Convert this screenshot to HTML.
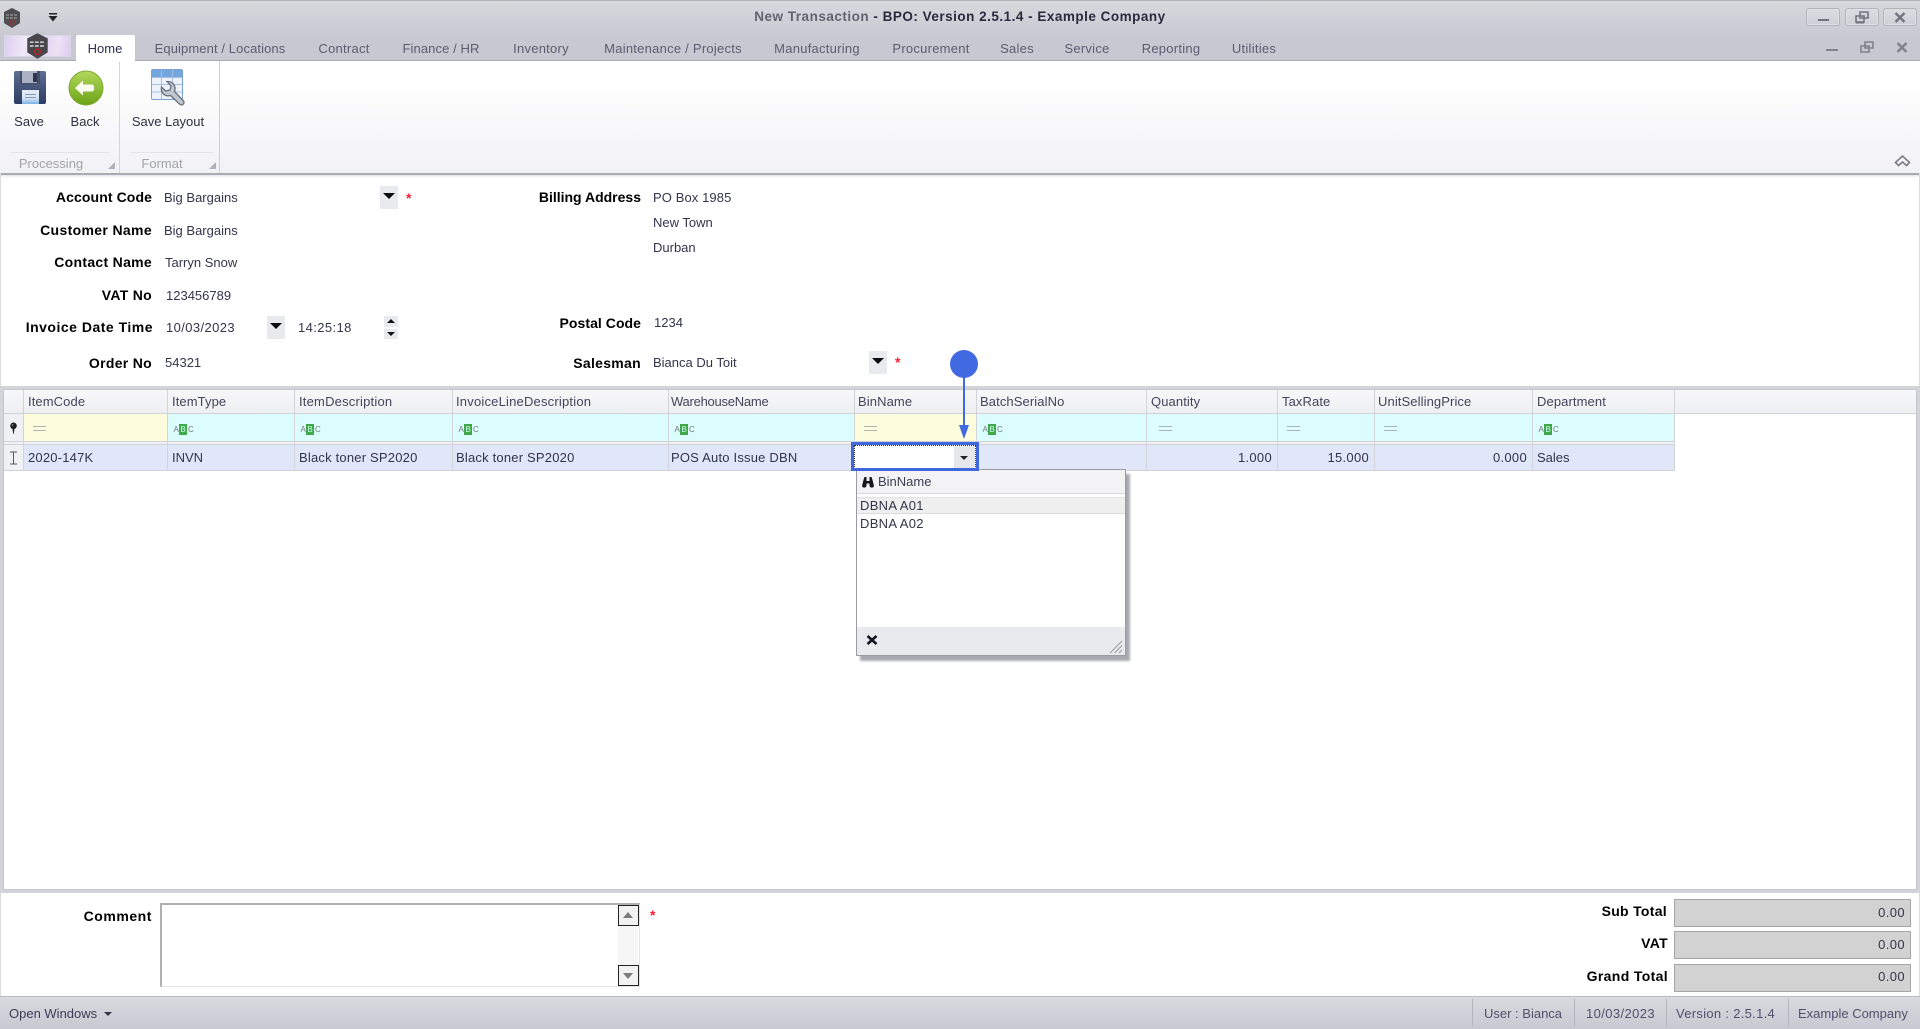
<!DOCTYPE html>
<html><head><meta charset="utf-8"><title>New Transaction</title>
<style>
html,body{margin:0;padding:0;background:#fff}
#a{position:relative;width:1920px;height:1029px;overflow:hidden;background:#fff;font:13px "Liberation Sans",sans-serif;color:#34344a;filter:blur(.3px)}
#a div,#a svg{position:absolute}
.t{position:absolute;white-space:nowrap;line-height:16px}
.r{text-align:right}
.c{transform:translateX(-50%)}
.b{font-weight:bold;font-size:14px;letter-spacing:.3px;color:#000}
.tab{color:#5c5d70;top:41px;letter-spacing:.25px}
.h{top:394px;color:#44455a;letter-spacing:.1px}
.d{top:450px;color:#33344a}
.star{color:#f5203a;font-weight:bold;font-size:14px}
.dd{background:#e9eaee;width:18px;height:23px}
.tri{width:0;height:0;border-left:6px solid transparent;border-right:6px solid transparent;border-top:6px solid #0c0c0c}
.ln{background:#d3d4da;width:1px}
.eq{width:13px;height:3px;border-top:1.500px solid #b0b1b8;border-bottom:1.500px solid #b0b1b8;top:425.500px}
.abc{top:424px;width:20px;height:11px;font-size:8px;line-height:11px;color:#777}
.abc i{font-style:normal;position:absolute;top:0}
.abc b{position:absolute;left:6px;top:0;width:8px;height:11px;background:#3fa84a;color:#cfe;font-weight:normal;text-align:center}
.box{background:#d2d2d2;border:1px solid #a6a6a6;left:1674px;width:235px;height:26px;box-sizing:content-box}
.sep{background:#b4b5bc;width:1px;top:999px;height:27px}
.win{border:1px solid #b2b3bb;border-radius:3px;background:linear-gradient(#dcdde1,#cfd0d7);box-sizing:border-box;height:18px;top:8px;box-shadow:inset 0 0 0 1px #dfe0e4}
</style></head><body><div id="a">

<!-- title + tabs -->
<div style="left:0;top:0;width:1920px;height:61px;background:linear-gradient(#d8d9dd,#c8c8d2 60%,#c8c8d2);border-top:1px solid #b2b3ba;box-sizing:border-box"></div>
<div style="left:0;top:60px;width:1920px;height:1px;background:#a8a9b1"></div>

<svg style="left:3px;top:8px" width="18" height="20" viewBox="0 0 18 20"><polygon points="9,0 17,4 17,15 9,20 1,15 1,4" fill="#4e4e52"/><path d="M3 7h12M3 10h12" stroke="#aaa" stroke-width="1" stroke-dasharray="3 1"/><circle cx="9" cy="14.500" r="2.200" fill="none" stroke="#a33" stroke-width="1"/></svg>
<svg style="left:47px;top:13px" width="12" height="9" viewBox="0 0 12 9"><path d="M2 0h8v1.500H2z" fill="#222"/><path d="M1.500 3h9L6 8.500z" fill="#222"/></svg>

<span class="t" style="left:0;width:1920px;text-align:center;top:9px;font-weight:bold;font-size:13.500px;letter-spacing:.5px;color:#2a2a3e"><span style="color:#62636f">New Transaction</span> - BPO: Version 2.5.1.4 - Example Company</span>

<div class="win" style="left:1806px;width:34px"></div>
<div style="left:1818px;top:19px;width:11px;height:2px;background:#73747f"></div>
<div class="win" style="left:1845px;width:34px"></div>
<svg style="left:1855px;top:11px" width="14" height="13" viewBox="0 0 14 13"><path d="M5 1h8v6H5zM1 5h8v6H1z" fill="#d3d4da" stroke="#73747f" stroke-width="1.600"/><path d="M1 12h8" stroke="#73747f"/></svg>
<div class="win" style="left:1883px;width:34px"></div>
<svg style="left:1894px;top:12px" width="12" height="11" viewBox="0 0 12 11"><path d="M1.500 1l9 9M10.500 1l-9 9" stroke="#73747f" stroke-width="2.400"/></svg>

<div style="left:1826px;top:49px;width:12px;height:2px;background:#80818c"></div>
<svg style="left:1860px;top:41px" width="14" height="13" viewBox="0 0 14 13"><path d="M5 1h8v6H5zM1 5h8v6H1z" fill="#c8c8d2" stroke="#80818c" stroke-width="1.600"/></svg>
<svg style="left:1896px;top:42px" width="12" height="11" viewBox="0 0 12 11"><path d="M1.500 1l9 9M10.500 1l-9 9" stroke="#80818c" stroke-width="2.400"/></svg>

<!-- app button -->
<div style="left:4px;top:35px;width:67px;height:22px;background:linear-gradient(100deg,#dccdf0,#f0e8f8 30%,#e2d2f2 55%,#ece2f6 80%,#dccbf0);border:1px solid #d8d8e0;box-sizing:border-box"></div>
<svg style="left:26px;top:33px" width="23" height="26" viewBox="0 0 18 20"><polygon points="9,0 17,4 17,15 9,20 1,15 1,4" fill="#47474b"/><path d="M3 7h12M3 10h12" stroke="#ddd" stroke-width="1.100" stroke-dasharray="3 1"/><circle cx="9" cy="14.500" r="2.200" fill="none" stroke="#b22" stroke-width="1"/></svg>
<div style="left:76px;top:35px;width:59px;height:27px;background:#fff;border-radius:2px 2px 0 0;z-index:2"></div>
<span class="t c" style="left:105px;top:41px;color:#2e3050;z-index:3">Home</span>
<span class="t c tab" style="left:220px;letter-spacing:.1px">Equipment / Locations</span>
<span class="t c tab" style="left:344px">Contract</span>
<span class="t c tab" style="left:441px;letter-spacing:.1px">Finance / HR</span>
<span class="t c tab" style="left:541px">Inventory</span>
<span class="t c tab" style="left:673px">Maintenance / Projects</span>
<span class="t c tab" style="left:817px">Manufacturing</span>
<span class="t c tab" style="left:931px">Procurement</span>
<span class="t c tab" style="left:1017px">Sales</span>
<span class="t c tab" style="left:1087px">Service</span>
<span class="t c tab" style="left:1171px">Reporting</span>
<span class="t c tab" style="left:1254px">Utilities</span>

<!-- ribbon -->
<div style="left:0;top:61px;width:1920px;height:112px;background:linear-gradient(#fff,#fff 14%,#f2f2f5 100%)"></div>
<div style="left:0;top:173px;width:1920px;height:2px;background:#a9aab2"></div>
<div style="left:0;top:175px;width:1920px;height:3px;background:linear-gradient(#e4e5ea,#fff)"></div>
<div style="left:119px;top:61px;width:1px;height:112px;background:#d4d5db"></div>
<div style="left:219px;top:61px;width:1px;height:112px;background:#cfd0d6"></div>
<div style="left:10px;top:152px;width:100px;height:1px;background:#e3e4e8"></div>
<div style="left:130px;top:152px;width:84px;height:1px;background:#e3e4e8"></div>
<span class="t c" style="left:51px;top:156px;color:#a2a3ab">Processing</span>
<span class="t c" style="left:162px;top:156px;color:#a2a3ab">Format</span>
<svg style="left:108px;top:162px" width="7" height="7"><path d="M7 0v7H0z" fill="#b0b1b8"/></svg>
<svg style="left:209px;top:162px" width="7" height="7"><path d="M7 0v7H0z" fill="#b0b1b8"/></svg>

<!-- save icon -->
<svg style="left:13px;top:70px" width="34" height="35" viewBox="0 0 34 35"><defs><linearGradient id="s" x1="0" y1="0" x2="0" y2="1"><stop offset="0" stop-color="#5f6f92"/><stop offset="1" stop-color="#2c3c62"/></linearGradient><linearGradient id="l" x1="0" y1="0" x2="0" y2="1"><stop offset="0" stop-color="#e6edf7"/><stop offset=".6" stop-color="#d5e3f4"/><stop offset="1" stop-color="#7db0e6"/></linearGradient></defs><rect x="1" y="1" width="32" height="33" rx="2" fill="url(#s)"/><rect x="7" y="1" width="20" height="13" fill="#454f6a"/><rect x="9" y="1" width="15" height="12" fill="#aab2c4"/><rect x="20" y="3" width="4" height="9" fill="#2c3450"/><rect x="9" y="20" width="17" height="14" fill="url(#l)"/><path d="M12 24.500h11M12 27.500h11" stroke="#8a99b2"/></svg>
<!-- back icon -->
<svg style="left:68px;top:70px" width="37" height="37" viewBox="0 0 37 37"><defs><linearGradient id="g" x1="0" y1="0" x2="0" y2="1"><stop offset="0" stop-color="#b2d85c"/><stop offset="1" stop-color="#6ca216"/></linearGradient></defs><circle cx="18" cy="18" r="17" fill="url(#g)" stroke="#80a830"/><path d="M7 18L15 10.500v4h9c3 0 3 7 0 7h-9v4z" fill="#fafdf0"/></svg>
<!-- layout icon -->
<svg style="left:150px;top:68px" width="38" height="38" viewBox="0 0 38 38"><rect x="1.500" y="1.500" width="31" height="30" rx="1.500" fill="#eef3fb" stroke="#7ba0d2"/><rect x="2" y="2" width="30" height="7.500" fill="#72a7de"/><path d="M11.500 2v29M22.500 2v29M2 9.500h30M2 16.500h30M2 24h30" stroke="#a4bfe3"/><path d="M33.500 33L24.500 23.500C26.500 18.500 23 13 17 13.500L21 18L20 22L15.500 23L11.500 19C10.500 25 15 29 20.500 27.500L30 36.500C32.500 38 35 35 33.500 33z" fill="#c2c6cf" stroke="#6a707c" stroke-width="1.300"/></svg>

<span class="t c" style="left:29px;top:114px;color:#2d2f44">Save</span>
<span class="t c" style="left:85px;top:114px;color:#2d2f44">Back</span>
<span class="t c" style="left:168px;top:114px;color:#2d2f44">Save Layout</span>
<svg style="left:1894px;top:154px" width="17" height="14" viewBox="0 0 17 14"><path d="M1.500 8.500L8.500 2l7 6.500-3 3-4-3.500-4 3.500z" fill="none" stroke="#7c7d88" stroke-width="1.600"/></svg>

<!-- form -->
<div style="left:0;top:173px;width:1px;height:823px;background:#dcdde1"></div>
<div style="left:1919px;top:173px;width:1px;height:823px;background:#dcdde1"></div>
<span class="t r b" style="right:1768px;top:189px;letter-spacing:.1px">Account Code</span>
<span class="t r b" style="right:1768px;top:222px;letter-spacing:.35px">Customer Name</span>
<span class="t r b" style="right:1768px;top:254px">Contact Name</span>
<span class="t r b" style="right:1768px;top:287px">VAT No</span>
<span class="t r b" style="right:1767px;top:319px;letter-spacing:.5px">Invoice Date Time</span>
<span class="t r b" style="right:1768px;top:355px">Order No</span>
<span class="t" style="left:164px;top:190px">Big Bargains</span>
<span class="t" style="left:164px;top:223px">Big Bargains</span>
<span class="t" style="left:165px;top:255px">Tarryn Snow</span>
<span class="t" style="left:166px;top:288px">123456789</span>
<span class="t" style="left:166px;top:320px;letter-spacing:.4px">10/03/2023</span>
<span class="t" style="left:298px;top:320px;letter-spacing:.4px">14:25:18</span>
<span class="t" style="left:165px;top:355px">54321</span>

<div class="dd" style="left:380px;top:186px"></div><div class="tri" style="left:383px;top:193px"></div>
<span class="t star" style="left:406px;top:190px">*</span>
<div class="dd" style="left:267px;top:316px"></div><div class="tri" style="left:270px;top:323px"></div>
<div class="dd" style="left:384px;top:316px;width:14px;height:11px"></div>
<div class="dd" style="left:384px;top:329px;width:14px;height:10px"></div>
<div style="left:387px;top:319px;width:0;height:0;border:4px solid transparent;border-top:0;border-bottom:4px solid #111"></div>
<div style="left:387px;top:332px;width:0;height:0;border:4px solid transparent;border-bottom:0;border-top:4px solid #111"></div>

<span class="t r b" style="right:1279px;top:189px;letter-spacing:0">Billing Address</span>
<span class="t r b" style="right:1279px;top:315px;letter-spacing:.05px">Postal Code</span>
<span class="t r b" style="right:1279px;top:355px">Salesman</span>
<span class="t" style="left:653px;top:190px;letter-spacing:.1px">PO Box 1985</span>
<span class="t" style="left:653px;top:215px">New Town</span>
<span class="t" style="left:653px;top:240px">Durban</span>
<span class="t" style="left:654px;top:315px">1234</span>
<span class="t" style="left:653px;top:355px">Bianca Du Toit</span>
<div class="dd" style="left:869px;top:351px"></div><div class="tri" style="left:872px;top:358px"></div>
<span class="t star" style="left:895px;top:354px">*</span>

<!-- grid -->
<div style="left:0;top:386px;width:1920px;height:507px;background:#fff;border:3px solid #d3d4d9;box-sizing:border-box"></div>
<div style="left:3px;top:389px;width:1914px;height:501px;border:1px solid #c6c7cd;box-sizing:border-box"></div>
<div style="left:4px;top:390px;width:1912px;height:24px;background:linear-gradient(#f7f7f9,#eeeff2);border-bottom:1px solid #d0d1d7;box-sizing:border-box"></div>
<div style="left:4px;top:414px;width:19px;height:27px;background:#f0f1f4"></div>
<div style="left:23px;top:414px;width:1651px;height:27px;background:#dbfdfd"></div>
<div style="left:23px;top:414px;width:144px;height:27px;background:#fdfcdc"></div>
<div style="left:854px;top:414px;width:122px;height:27px;background:#fdfcdc"></div>
<div style="left:4px;top:441px;width:1670px;height:4px;background:#f0f1f3;border-top:1px solid #d0d1d7;border-bottom:1px solid #d0d1d7;box-sizing:border-box"></div>
<div style="left:4px;top:445px;width:19px;height:26px;background:#f0f1f4;border-bottom:1px solid #d0d1d7;box-sizing:border-box"></div>
<div style="left:23px;top:445px;width:1651px;height:26px;background:#e0e7f9;border-bottom:1px solid #d0d1d7;box-sizing:border-box"></div>

<div class="ln" style="left:23px;top:390px;height:81px"></div>
<div class="ln" style="left:167px;top:390px;height:81px"></div>
<div class="ln" style="left:294px;top:390px;height:81px"></div>
<div class="ln" style="left:452px;top:390px;height:81px"></div>
<div class="ln" style="left:668px;top:390px;height:81px"></div>
<div class="ln" style="left:854px;top:390px;height:81px"></div>
<div class="ln" style="left:976px;top:390px;height:81px"></div>
<div class="ln" style="left:1146px;top:390px;height:81px"></div>
<div class="ln" style="left:1277px;top:390px;height:81px"></div>
<div class="ln" style="left:1374px;top:390px;height:81px"></div>
<div class="ln" style="left:1532px;top:390px;height:81px"></div>
<div class="ln" style="left:1674px;top:390px;height:81px"></div>

<span class="t h" style="left:28px">ItemCode</span>
<span class="t h" style="left:172px">ItemType</span>
<span class="t h" style="left:299px;letter-spacing:.2px">ItemDescription</span>
<span class="t h" style="left:456px;letter-spacing:.2px">InvoiceLineDescription</span>
<span class="t h" style="left:671px;letter-spacing:-.25px">WarehouseName</span>
<span class="t h" style="left:858px">BinName</span>
<span class="t h" style="left:980px">BatchSerialNo</span>
<span class="t h" style="left:1151px">Quantity</span>
<span class="t h" style="left:1282px">TaxRate</span>
<span class="t h" style="left:1378px">UnitSellingPrice</span>
<span class="t h" style="left:1537px">Department</span>

<svg style="left:9px;top:422px" width="9" height="12" viewBox="0 0 9 12"><circle cx="4.500" cy="3.800" r="3.300" fill="#1e1e1e"/><circle cx="3.500" cy="3" r=".9" fill="#888"/><path d="M3.500 7h2L4.700 12h-.4z" fill="#1e1e1e"/></svg>
<div class="eq" style="left:33px"></div>
<div class="eq" style="left:864px"></div>
<div class="eq" style="left:1159px"></div>
<div class="eq" style="left:1287px"></div>
<div class="eq" style="left:1384px"></div>

<div class="abc" style="left:173px"><i style="left:.5px">A</i><b>B</b><i style="left:15px">C</i></div>
<div class="abc" style="left:300px"><i style="left:.5px">A</i><b>B</b><i style="left:15px">C</i></div>
<div class="abc" style="left:458px"><i style="left:.5px">A</i><b>B</b><i style="left:15px">C</i></div>
<div class="abc" style="left:674px"><i style="left:.5px">A</i><b>B</b><i style="left:15px">C</i></div>
<div class="abc" style="left:982px"><i style="left:.5px">A</i><b>B</b><i style="left:15px">C</i></div>
<div class="abc" style="left:1538px"><i style="left:.5px">A</i><b>B</b><i style="left:15px">C</i></div>

<svg style="left:9px;top:451px" width="9" height="14" viewBox="0 0 9 14"><path d="M1 1h7M1 13h7M4.500 1v12" stroke="#55565f" fill="none"/></svg>
<span class="t d" style="left:28px;letter-spacing:.2px">2020-147K</span>
<span class="t d" style="left:172px">INVN</span>
<span class="t d" style="left:299px;letter-spacing:.2px">Black toner SP2020</span>
<span class="t d" style="left:456px;letter-spacing:.2px">Black toner SP2020</span>
<span class="t d" style="left:671px;letter-spacing:.2px">POS Auto Issue DBN</span>
<span class="t d r" style="right:648px;letter-spacing:.3px">1.000</span>
<span class="t d r" style="right:551px;letter-spacing:.3px">15.000</span>
<span class="t d r" style="right:393px;letter-spacing:.3px">0.000</span>
<span class="t d" style="left:1537px">Sales</span>

<!-- popup -->
<div style="left:860px;top:474px;width:270px;height:187px;background:#9a9ba2;filter:blur(1px);opacity:.85"></div>
<div style="left:856px;top:469px;width:270px;height:187px;background:#fff;border:1px solid #9a9ba4;box-sizing:border-box"></div>
<div style="left:857px;top:470px;width:268px;height:24px;background:#f3f3f6;border-bottom:1px solid #d8d9dd;box-sizing:border-box"></div>
<svg style="left:861px;top:476px" width="14" height="12" viewBox="0 0 14 12"><path d="M1 10l1.500-6 1-3h2v4h3V1h2l1 3 1.500 6-1 1.500H9.500L8.500 10v-2.500h-3V10l-1 1.500H2z" fill="#15151c"/></svg>
<span class="t" style="left:878px;top:474px;color:#3e3f55">BinName</span>
<div style="left:857px;top:497px;width:268px;height:17px;background:#efeff0;border-top:1px solid #e2e2e6;border-bottom:1px solid #dcdce0;box-sizing:border-box"></div>
<span class="t" style="left:860px;top:498px;letter-spacing:.3px;color:#33344a">DBNA A01</span>
<span class="t" style="left:860px;top:516px;letter-spacing:.3px;color:#33344a">DBNA A02</span>
<div style="left:857px;top:627px;width:268px;height:28px;background:#e9eaee"></div>
<svg style="left:866px;top:635px" width="12" height="10" viewBox="0 0 12 10"><path d="M1.500 1l9 8M10.500 1l-9 8" stroke="#15151f" stroke-width="2.600"/></svg>
<svg style="left:1108px;top:640px" width="15" height="14" viewBox="0 0 15 14"><path d="M2 13L14 1M6.500 13L14 5.500M11 13l3-3" stroke="#9a9ba2"/></svg>

<!-- editor -->
<div style="left:854px;top:445px;width:122px;height:24px;background:#fff;border:1px dotted #333;box-sizing:border-box"></div>
<div style="left:954px;top:446px;width:21px;height:22px;background:#e6e7eb"></div>
<div class="tri" style="left:960px;top:456px;border-left-width:4.500px;border-right-width:4.500px;border-top-width:4.500px;border-top-color:#222"></div>
<div style="left:851px;top:442px;width:128px;height:29px;border:3px solid #3f68dc;box-sizing:border-box"></div>

<!-- annotation -->
<div style="left:950px;top:350px;width:28px;height:28px;border-radius:50%;background:#4169e1"></div>
<div style="left:963px;top:376px;width:2px;height:52px;background:#4169e1"></div>
<div style="left:959px;top:425px;width:0;height:0;border-left:5px solid transparent;border-right:5px solid transparent;border-top:14px solid #4169e1"></div>

<!-- comment -->
<span class="t r b" style="right:1768px;top:908px;letter-spacing:.55px">Comment</span>
<div style="left:160px;top:903px;width:480px;height:84px;background:#fff;border:2px solid #b0b0b0;border-right:1px solid #e4e4e4;border-bottom:1px solid #e4e4e4;box-sizing:border-box"></div>
<div style="left:618px;top:905px;width:20px;height:81px;background:#f6f6f6"></div>
<div style="left:618px;top:905px;width:21px;height:21px;background:#f2f2f2;border:1px solid #222;box-sizing:border-box"></div>
<div style="left:618px;top:965px;width:21px;height:21px;background:#f2f2f2;border:1px solid #222;box-sizing:border-box"></div>
<div style="left:623px;top:912px;width:0;height:0;border:5px solid transparent;border-top:0;border-bottom:6px solid #7b7b7b"></div>
<div style="left:623px;top:973px;width:0;height:0;border:5px solid transparent;border-bottom:0;border-top:6px solid #7b7b7b"></div>
<span class="t star" style="left:650px;top:907px">*</span>

<!-- totals -->
<span class="t r b" style="right:253px;top:903px">Sub Total</span>
<span class="t r b" style="right:252px;top:935px">VAT</span>
<span class="t r b" style="right:252px;top:968px;letter-spacing:.35px">Grand Total</span>
<div class="box" style="top:899px"></div>
<div class="box" style="top:931px"></div>
<div class="box" style="top:964px"></div>
<span class="t r" style="right:15px;top:905px;letter-spacing:.4px">0.00</span>
<span class="t r" style="right:15px;top:937px;letter-spacing:.4px">0.00</span>
<span class="t r" style="right:15px;top:969px;letter-spacing:.4px">0.00</span>

<!-- status -->
<div style="left:0;top:996px;width:1920px;height:33px;background:linear-gradient(#d9dade,#c8c8d2);border-top:1px solid #b8b9c0;box-sizing:border-box"></div>
<span class="t" style="left:9px;top:1006px;color:#3c3d54">Open Windows</span>
<div style="left:104px;top:1012px;width:0;height:0;border-left:4px solid transparent;border-right:4px solid transparent;border-top:4px solid #33344a"></div>
<div class="sep" style="left:1472px"></div>
<div class="sep" style="left:1574px"></div>
<div class="sep" style="left:1666px"></div>
<div class="sep" style="left:1788px"></div>
<span class="t" style="left:1484px;top:1006px;color:#50516a">User : Bianca</span>
<span class="t" style="left:1586px;top:1006px;color:#50516a;letter-spacing:.4px">10/03/2023</span>
<span class="t" style="left:1676px;top:1006px;color:#50516a;letter-spacing:.3px">Version : 2.5.1.4</span>
<span class="t" style="left:1798px;top:1006px;color:#50516a">Example Company</span>
</div></body></html>
